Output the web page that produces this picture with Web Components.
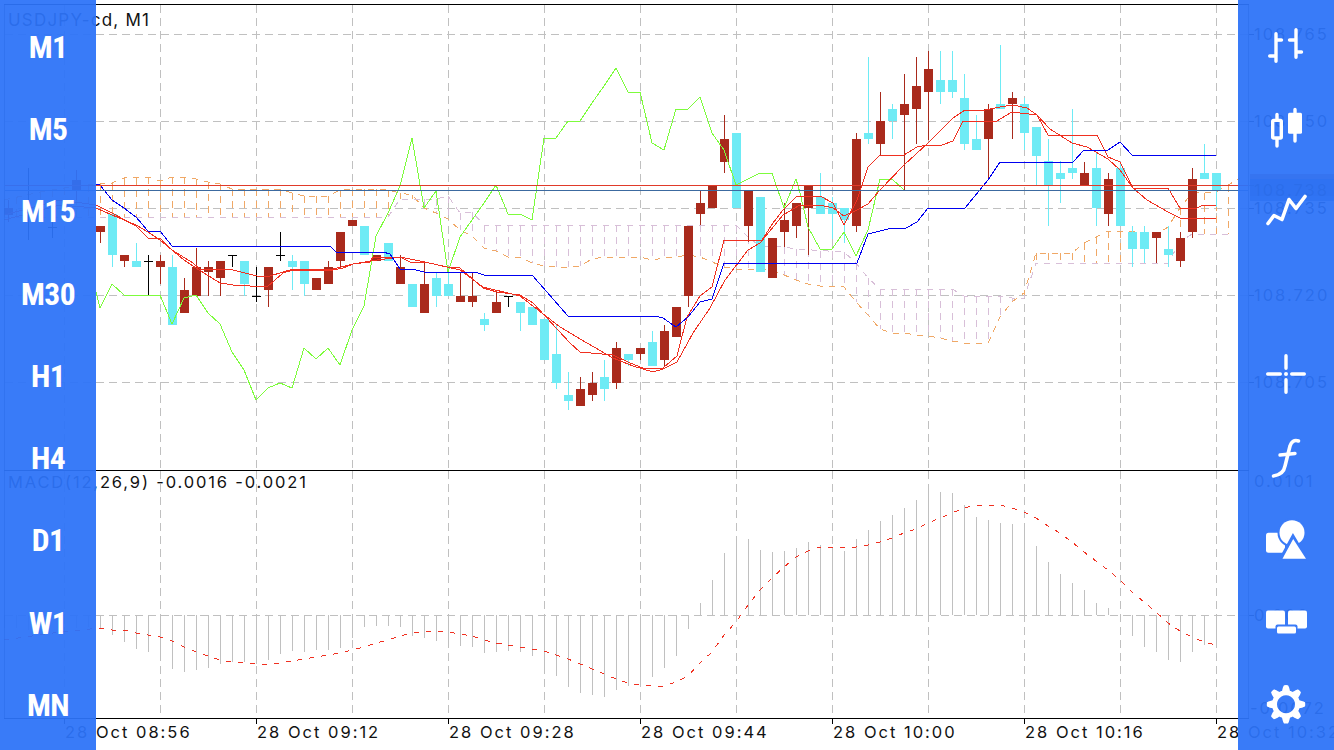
<!DOCTYPE html>
<html lang="en">
<head>
<meta charset="utf-8">
<title>USDJPY chart</title>
<style>
html,body{margin:0;padding:0;background:#fff}
</style>
</head>
<body>
<trade-screen>
  <chart-surface></chart-surface>
  <period-rail slot="left">
    <rail-item>M1</rail-item><rail-item>M5</rail-item><rail-item>M15</rail-item>
    <rail-item>M30</rail-item><rail-item>H1</rail-item><rail-item>H4</rail-item>
    <rail-item>D1</rail-item><rail-item>W1</rail-item><rail-item>MN</rail-item>
  </period-rail>
  <period-rail slot="right">
    <rail-icon name="bars"></rail-icon><rail-icon name="candles"></rail-icon><rail-icon name="line"></rail-icon>
    <rail-icon></rail-icon>
    <rail-icon name="cross"></rail-icon><rail-icon name="func"></rail-icon><rail-icon name="shapes"></rail-icon>
    <rail-icon name="windows"></rail-icon><rail-icon name="gear"></rail-icon>
  </period-rail>
</trade-screen>
<script>
/* ---------- data, in chart pixels ---------- */
const R='#a92a1c',C='#6eebf5',K='#000';
// x, wickTop, wickBottom, bodyTop, bodyBottom, colour
const candles=[
[100,226,243,226,232,R],[112,214,267,214,255,C],[124,255,267,255,261,R],[136,243,267,261,267,C],
[148,255,295,261,261,K],[160,255,284,261,267,R],[172,255,325,267,325,C],[184,278,313,290,313,R],
[196,248,296,267,296,R],[208,261,296,267,272,R],[220,261,296,261,278,R],[232,255,267,255,255,K],
[244,261,296,261,284,C],[256,267,302,296,296,K],[268,267,307,267,290,R],[280,232,261,255,255,K],
[292,255,290,261,267,C],[304,261,296,261,284,C],[316,278,290,278,290,R],[328,261,284,267,284,R],
[340,232,267,232,261,R],[352,220,226,220,226,R],[364,226,255,226,255,C],[376,255,261,255,261,R],
[388,243,261,243,261,C],[400,255,284,267,284,R],[412,284,307,284,307,C],[424,262,313,284,313,R],
[436,272,307,278,296,C],[448,267,296,284,296,C],[460,272,302,296,302,R],[472,272,307,296,302,R],
[484,313,331,319,325,C],[496,290,313,302,313,R],[508,296,307,296,296,K],[520,302,331,302,313,C],
[532,307,325,307,325,C],[544,319,360,319,360,C],[556,325,389,354,383,C],[568,372,410,395,401,C],
[580,377,406,389,406,R],[592,372,401,383,395,R],[604,360,401,377,389,C],[616,342,389,348,383,R],
[628,354,366,354,360,C],[640,348,360,348,354,R],[652,331,366,342,366,C],[664,325,366,331,360,R],
[676,307,337,307,337,R],[688,226,307,226,296,R],[700,191,225,203,214,R],[712,185,208,185,208,R],
[724,115,173,139,162,R],[736,133,208,133,208,C],[748,191,242,191,226,R],[760,197,272,197,272,C],
[772,238,278,238,278,R],[784,203,247,220,232,R],[796,203,238,203,226,R],[808,185,255,185,208,R],
[820,173,214,197,214,C],[832,197,239,203,214,C],[844,208,243,208,220,C],[856,133,232,139,226,R],
[868,57,144,133,139,C],[880,92,155,121,144,R],[892,104,139,109,121,C],[904,74,190,104,115,R],
[916,57,144,86,109,R],[928,51,140,69,92,R],[940,51,104,80,92,C],[952,51,98,80,92,C],
[964,74,150,98,144,C],[976,115,150,139,150,C],[988,104,180,109,139,R],[1000,45,109,104,109,C],
[1012,92,139,98,104,R],[1024,98,150,104,133,C],[1036,127,185,127,156,C],[1048,139,226,161,185,C],
[1060,161,203,173,179,C],[1072,109,179,168,173,C],[1084,162,185,173,185,R],[1096,152,226,168,208,C],
[1108,173,226,179,214,R],[1120,163,226,168,226,C],[1132,226,267,232,249,C],[1144,226,263,232,249,C],
[1156,232,263,232,238,R],[1168,226,267,249,255,C],[1180,232,267,238,261,R],[1192,168,238,179,232,R],
[1204,144,179,173,179,C],[1216,173,207,173,191,C],
[76,170,200,180,190,R],[8,200,222,208,215,R],[28,168,240,212,212,K],[52,216,238,227,227,K]];

const green=[[96,292],[100,308],[112,284],[124,295],[160,295],[172,324],[184,298],[196,295],[208,313],[220,324],[232,352],[244,370],[256,400],[268,388],[280,383],[292,388],[304,348],[316,359],[328,348],[340,365],[352,330],[364,306],[376,236],[388,213],[400,186],[412,138],[424,208],[436,191],[448,272],[460,237],[472,220],[484,203],[496,185],[508,214],[520,214],[532,220],[544,138],[556,138],[568,121],[580,121],[592,103],[604,86],[616,68],[628,92],[640,92],[652,143],[664,150],[676,109],[688,109],[700,97],[712,133],[724,150],[736,185],[748,179],[760,173],[772,173],[784,208],[796,179],[800,193],[808,227],[820,249],[832,249],[844,232],[856,256],[868,230],[880,179],[892,179],[904,190]];
const blue=[[96,184],[100,185],[112,200],[124,208],[136,217],[148,231],[160,231],[172,246],[330,246],[336,252],[383,252],[390,254],[400,269],[412,269],[424,272],[475,272],[484,275],[532,275],[568,316],[655,316],[663,318],[676,327],[688,317],[700,302],[712,299],[724,263],[857,263],[868,234],[880,231],[892,228],[906,228],[917,222],[928,208],[965,208],[988,180],[1000,162],[1073,162],[1084,150],[1108,150],[1120,142],[1132,155],[1216,155]];
const redA=[[4,215],[60,200],[96,205],[112,213],[136,226],[148,238],[160,238],[172,250],[184,260],[196,268],[220,283],[233,285],[267,287],[283,273],[293,270],[333,270],[343,268],[353,264],[370,262],[373,257],[400,257],[410,262],[425,262],[447,267],[460,268],[483,288],[497,292],[520,295],[533,303],[570,343],[580,352],[613,355],[630,363],[643,368],[663,368],[677,356],[687,317],[700,296],[712,287],[724,240],[762,240],[773,223],[783,210],[797,196],[820,196],[833,203],[844,225],[857,200],[868,167],[880,155],[904,155],[917,147],[928,145],[942,145],[953,141],[963,121],[997,121],[1012,112],[1037,115],[1048,135],[1097,135],[1108,157],[1120,162],[1133,188],[1168,188],[1180,208],[1197,208],[1203,205],[1216,205]];
const redB=[[4,220],[60,205],[96,208],[112,215],[136,225],[148,232],[160,240],[172,250],[193,263],[200,269],[233,270],[257,276],[270,276],[293,269],[333,269],[353,264],[377,260],[400,257],[425,262],[460,270],[483,287],[520,296],[560,327],[587,343],[613,358],[633,366],[653,372],[663,369],[677,362],[693,333],[710,308],[725,280],[748,250],[760,243],[783,215],[800,205],[820,205],[833,208],[844,216],[857,210],[868,204],[880,190],[904,165],[928,143],[953,118],[965,110],[980,111],[1000,107],[1013,105],[1027,108],[1037,115],[1050,129],[1072,143],[1087,147],[1108,159],[1120,170],[1133,188],[1147,200],[1168,212],[1180,218],[1197,219],[1216,218]];

const senkouA=[[4,200],[40,192],[76,186],[100,184],[112,183],[124,178],[148,177],[160,181],[172,177],[184,177],[196,179],[208,182],[220,184],[232,189],[280,189],[292,193],[304,196],[328,196],[340,190],[352,189],[376,189],[388,190],[400,193],[412,195],[424,208],[436,213],[448,219],[460,230],[472,236],[484,248],[496,251],[508,257],[520,257],[532,263],[544,266],[556,267],[568,267],[580,266],[592,259],[604,257],[640,257],[652,260],[664,258],[676,257],[688,255],[700,257],[712,262],[724,267],[736,269],[760,269],[772,271],[784,275],[796,280],[808,284],[820,286],[832,286],[844,287],[856,302],[868,315],[880,329],[892,333],[904,333],[916,335],[928,336],[940,338],[952,341],[964,343],[988,343],[1000,317],[1012,302],[1024,293],[1036,253],[1072,253],[1084,243],[1096,237],[1108,231],[1132,231],[1144,233],[1156,235],[1168,227],[1180,208],[1192,193],[1216,192],[1228,185],[1240,178]];
const senkouB=[[4,217],[388,217],[400,199],[436,199],[448,196],[460,213],[472,212],[484,225],[736,225],[748,237],[760,246],[772,246],[784,247],[796,249],[844,252],[856,263],[868,278],[880,289],[952,289],[964,296],[1000,296],[1012,298],[1024,298],[1036,263],[1168,263],[1180,242],[1192,234],[1228,234]];

const hist=[628,635,642,649,652,659,669,672,670,668,664,662,662,664,660,654,651,652,650,650,648,638,627,626,626,627,636,638,641,645,646,647,653,652,651,652,656,669,676,687,693,695,697,690,686,685,677,668,656,629,603,580,553,543,539,550,552,551,548,542,545,548,551,539,530,521,515,508,500,492,492,493,505,517,520,523,524,531,546,562,574,583,590,603,608,615,636,647,652,660,662,652,645,645];
const signal=[628,630,630,633,635,637,641,647,652,656,660,662,662,664,664,663,661,659,657,655,653,650,647,643,640,636,633,632,631,632,634,636,640,643,645,647,649,651,655,659,664,669,674,679,683,685,686,686,682,676,663,652,635,622,605,590,578,567,557,551,547,547,547,547,545,542,538,533,529,523,518,513,508,505,505,505,508,512,518,526,533,542,552,561,570,580,592,602,612,623,631,637,642,645];

const yAt=(pts,x)=>{for(let i=1;i<pts.length;i++){if(x<=pts[i][0]){const[a,b]=pts[i-1],[c,d]=pts[i];return b+(d-b)*(x-a)/(c-a);}}return pts[pts.length-1][1];};
const P=pts=>pts.map(p=>p.join(',')).join(' ');
const GRID='#c0c0c0';
const gridX=(y1,y2)=>{let s='';for(let x=64;x<=1216;x+=96)s+=`<line x1="${x+.5}" x2="${x+.5}" y1="${y1}" y2="${y2}" class="grid"/>`;return s;};
const gridY=ys=>ys.map(y=>`<line x1="5" x2="1248" y1="${y+.5}" y2="${y+.5}" class="grid"/>`).join('');
const paneCss=`:host{display:block;line-height:0}svg{display:block}
.grid{stroke:${GRID};stroke-dasharray:8 5;fill:none}
.crisp{shape-rendering:crispEdges}
text{font-family:Inter,"Liberation Sans",sans-serif;fill:#111}
polyline{fill:none;shape-rendering:crispEdges}`;

class PricePane extends HTMLElement{
  connectedCallback(){
    const r=this.attachShadow({mode:'open'});
    let cloud='';
    for(let x=4;x<=1228;x+=12){
      const a=yAt(senkouA,x),b=yAt(senkouB,x);
      if(Math.abs(a-b)<2)continue;
      cloud+=`<line x1="${x+.5}" x2="${x+.5}" y1="${Math.min(a,b)}" y2="${Math.max(a,b)}" stroke="${a<b?'#f0a866':'#d8bfd8'}" stroke-dasharray="7 5"/>`;
    }
    let cs='';
    for(const[x,wt,wb,bt,bb,col]of candles){
      cs+=`<rect x="${x}" y="${wt}" width="1" height="${wb-wt}" fill="${col}"/>`;
      if(col===K) cs+=`<rect x="${x-4}" y="${bt}" width="9" height="1" fill="${K}"/>`;
      else cs+=`<rect x="${x-4}" y="${bt}" width="9" height="${bb-bt}" fill="${col}"/>`;
    }
    const prices=[[34,'108.765'],[121,'108.750'],[208,'108.735'],[295,'108.720'],[382,'108.705']];
    r.innerHTML=`<style>${paneCss}:host{height:470px}</style>
    <svg width="1334" height="470" viewBox="0 0 1334 470">
      <g class="crisp">${gridX(5,470)}${gridY([34,121,208,295,382])}</g>
      <g class="crisp">${cloud}</g>
      <polyline points="${P(senkouA)}" stroke="#f0a866" stroke-dasharray="6 6"/>
      <polyline points="${P(senkouB)}" stroke="#d8bfd8" stroke-dasharray="6 6"/>
      <g class="crisp">${cs}</g>
      <polyline points="${P(green)}" stroke="#7dfc3c"/>
      <polyline points="${P(redA)}" stroke="#f03020"/>
      <polyline points="${P(redB)}" stroke="#f03020"/>
      <polyline points="${P(blue)}" stroke="#0000f0"/>
      <g class="crisp">
        <rect x="5" y="185" width="1243" height="1" fill="#e03a2a"/>
        <rect x="5" y="190" width="1243" height="1" fill="#3c6aa0"/>
        <rect x="4" y="4" width="1245" height="1" fill="#000"/>
        <rect x="4" y="4" width="1" height="466" fill="#000" opacity=".55"/>
        <rect x="1248" y="4" width="1" height="466" fill="#000" opacity=".55"/>
        <rect x="1250" y="174" width="84" height="22" fill="#a0302a" opacity=".6"/>
        <rect x="1250" y="179" width="84" height="22" fill="#3c6aa0" opacity=".8"/>
        <rect x="1249" y="185" width="5" height="1" fill="#000" opacity=".5"/>
        ${prices.map(p=>`<rect x="1249" y="${p[0]}" width="5" height="1" fill="#000"/>`).join('')}
      </g>
      <text x="8" y="26" font-size="17" letter-spacing="1.2">USDJPY-cd, M1</text>
      ${prices.map(p=>`<text x="1254" y="${p[0]+6}" font-size="16.5" letter-spacing="2">${p[1]}</text>`).join('')}
      <text x="1254" y="196" font-size="16.5" letter-spacing="2">108.738</text>
    </svg>`;
  }
}
class MacdPane extends HTMLElement{
  connectedCallback(){
    const r=this.attachShadow({mode:'open'});
    let bars='';
    hist.forEach((v,i)=>{const x=100+12*i;if(v===615)return;bars+=`<rect x="${x}" y="${Math.min(v,615)}" width="1" height="${Math.abs(v-615)}" fill="#c0c0c0"/>`;});
    for(let i=0;i<8;i++){const x=4+12*i,v=[628,628,630,620,618,624,628,627][i];bars+=`<rect x="${x}" y="${Math.min(v,615)}" width="1" height="${Math.abs(v-615)}" fill="#c0c0c0"/>`;}
    const sig=signal.map((v,i)=>[100+12*i,v]);
    r.innerHTML=`<style>${paneCss}:host{height:248px}</style>
    <svg width="1334" height="248" viewBox="0 470 1334 248">
      <g class="crisp">${gridX(471,718)}${gridY([615])}${bars}</g>
      <polyline points="4,640 60,632 ${P(sig)}" stroke="#f03020" stroke-dasharray="5 7"/>
      <g class="crisp">
        <rect x="4" y="470" width="1245" height="1" fill="#000"/>
        <rect x="4" y="470" width="1" height="248" fill="#000" opacity=".55"/>
        <rect x="1248" y="470" width="1" height="248" fill="#000" opacity=".55"/>
        <rect x="1249" y="615" width="5" height="1" fill="#000"/>
      </g>
      <text x="8" y="488" font-size="16.5" letter-spacing="1.84">MACD(12,26,9) -0.0016 -0.0021</text>
      <text x="1254" y="487" font-size="16.5" letter-spacing="2">0.0101</text>
      <text x="1254" y="621" font-size="16.5" letter-spacing="2">0.000</text>
      <text x="1250" y="714" font-size="16.5" letter-spacing="2">-0.0072</text>
    </svg>`;
  }
}
class TimeAxis extends HTMLElement{
  connectedCallback(){
    const r=this.attachShadow({mode:'open'});
    const labels=[[64,'28 Oct 08:56'],[256,'28 Oct 09:12'],[448,'28 Oct 09:28'],[640,'28 Oct 09:44'],[832,'28 Oct 10:00'],[1024,'28 Oct 10:16'],[1216,'28 Oct 10:32']];
    r.innerHTML=`<style>${paneCss}:host{height:32px}</style>
    <svg width="1334" height="32" viewBox="0 718 1334 32">
      <g class="crisp">
        <rect x="4" y="718" width="1245" height="1" fill="#000"/>
        ${labels.map(l=>`<rect x="${l[0]}" y="718" width="1" height="6" fill="#000"/>`).join('')}
      </g>
      ${labels.map(l=>`<text x="${l[0]+1}" y="738" font-size="16.5" letter-spacing="2">${l[1]}</text>`).join('')}
    </svg>`;
  }
}
class ChartSurface extends HTMLElement{
  connectedCallback(){
    const r=this.attachShadow({mode:'open'});
    r.innerHTML=`<style>:host{display:flex;flex-direction:column;width:1334px;height:750px;overflow:hidden;background:#fff}</style>
    <price-pane></price-pane><macd-pane></macd-pane><time-axis></time-axis>`;
  }
}
class TradeScreen extends HTMLElement{
  connectedCallback(){
    const r=this.attachShadow({mode:'open'});
    r.innerHTML=`<style>
      :host{display:block;position:relative;width:1334px;height:750px;overflow:hidden}
      .l,.r{position:absolute;top:0;bottom:0;width:96px;display:block}
      .l{left:0}.r{right:0}
    </style>
    <slot></slot>
    <div class="l"><slot name="left"></slot></div>
    <div class="r"><slot name="right"></slot></div>`;
  }
}
class PeriodRail extends HTMLElement{
  connectedCallback(){
    const r=this.attachShadow({mode:'open'});
    r.innerHTML=`<style>
      :host{display:grid;grid-template-rows:repeat(9,1fr);box-sizing:border-box;height:750px;width:96px;
        padding:6px 0 4px;background:rgba(45,115,248,.94)}
    </style><slot></slot>`;
  }
}
class RailItem extends HTMLElement{
  connectedCallback(){
    const r=this.attachShadow({mode:'open'});
    r.innerHTML=`<style>
      :host{display:flex;align-items:center;justify-content:center;color:#fff;
        font:bold 31.5px/.8 "Liberation Sans Narrow","Roboto Condensed","Liberation Sans",sans-serif;letter-spacing:-.6px;padding-top:1px}
    </style><slot></slot>`;
  }
}
const gearPath=(()=>{
  let d='';const n=240;
  for(let i=0;i<n;i++){const t=i/n*Math.PI*2;
    const c=Math.cos(8*t);const rad=16.6+2.6*Math.max(-1,Math.min(1,c*1.5));
    d+=(i?'L':'M')+(25+rad*Math.sin(t)).toFixed(2)+' '+(23.3-rad*Math.cos(t)).toFixed(2);}
  return d+'Z M25 14.3a9 9 0 1 0 .01 0Z';
})();
const BG='#3a7bf8';
const ICONS={
 bars:`<g fill="none" stroke="#fff" stroke-width="3.4" stroke-linecap="round">
   <path d="M15 10.7V38.300M15 17H20.500M8.700 33H15"/><path d="M35 6.700V34.300M28.500 17H35M35 29H40.500"/></g>`,
 candles:`<g fill="none" stroke="#fff" stroke-width="3.4" stroke-linecap="round">
   <path d="M16 9.400V15M16 34V41"/><rect x="11.700" y="15.400" width="8.600" height="17.600" rx="1"/>
   <path d="M34 4.400V9M34 28V36"/></g><rect x="27" y="7.700" width="14" height="21" rx="1.500" fill="#fff"/>`,
 line:`<polyline points="7,35.500 13,27.500 21,31.500 28,11.500 35,20.500 44,8.500" fill="none" stroke="#fff" stroke-width="3.600" stroke-linecap="round" stroke-linejoin="round"/>`,
 cross:`<g stroke="#fff" stroke-width="3.400" stroke-linecap="round"><path d="M6.700 22H19.300M30.700 22H43.300M25 3.700V16.300M25 27.700V40.300"/></g><circle cx="25" cy="22" r="2" fill="#fff"/>`,
 func:`<path d="M37.500 7C33 5.500 30 8 29 12L24 32C23 38 19 41 12.500 42" fill="none" stroke="#fff" stroke-width="3.600" stroke-linecap="round"/><path d="M19 21L34 19.500" stroke="#fff" stroke-width="3.400" stroke-linecap="round" fill="none"/>`,
 shapes:`<rect x="5" y="16.700" width="19" height="20" rx="2.500" fill="#fff"/>
   <circle cx="31" cy="16.700" r="14.500" fill="${BG}"/><circle cx="31" cy="16.700" r="12.500" fill="#fff"/>
   <path d="M32 20.700 20 42.700H45Z" fill="#fff" stroke="${BG}" stroke-width="3.600" stroke-linejoin="miter"/>
   <path d="M32.200 23 21.500 42.700H45Z" fill="#fff"/>`,
 windows:`<rect x="5" y="11.500" width="19" height="18" rx="2" fill="#fff"/><rect x="27" y="11.500" width="19" height="18" rx="2" fill="#fff"/>
   <rect x="14.500" y="25.500" width="22" height="11" rx="2" fill="${BG}"/><rect x="16" y="27.500" width="19" height="7" rx="1.500" fill="#fff"/>`,
 gear:`<path d="${gearPath}" fill="#fff" fill-rule="evenodd"/>`
};
class RailIcon extends HTMLElement{
  connectedCallback(){
    const r=this.attachShadow({mode:'open'});
    const n=this.getAttribute('name');
    r.innerHTML=`<style>
      :host{display:flex;align-items:center;justify-content:center}
      svg{display:block}
    </style>${n?`<svg width="50" height="48" viewBox="0 0 50 48">${ICONS[n]}</svg>`:''}`;
  }
}
customElements.define('price-pane',PricePane);
customElements.define('macd-pane',MacdPane);
customElements.define('time-axis',TimeAxis);
customElements.define('chart-surface',ChartSurface);
customElements.define('rail-item',RailItem);
customElements.define('rail-icon',RailIcon);
customElements.define('period-rail',PeriodRail);
customElements.define('trade-screen',TradeScreen);
</script>
</body>
</html>
